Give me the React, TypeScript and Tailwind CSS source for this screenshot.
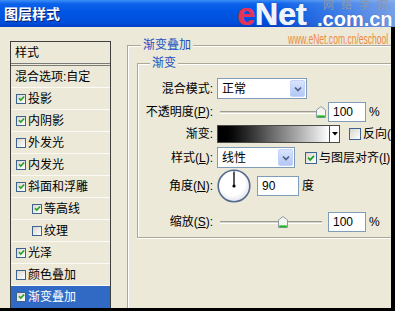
import React from "react";

const F = "font-['Liberation_Sans','Noto_Sans_CJK_SC',sans-serif]";

function Check({ on, big }: { on: boolean; big?: boolean }) {
  return (
    <span
      className={`flex shrink-0 items-center justify-center border border-[#3d6391] bg-gradient-to-br from-[#d8d6cc] to-white ${
        big ? "h-[12px] w-[12px]" : "h-[10px] w-[10px]"
      }`}
    >
      {on && (
        <svg viewBox="0 0 9 9" className={big ? "h-[8px] w-[8px]" : "h-[7px] w-[7px]"}>
          <path d="M1.2 4.2 L3.6 6.6 L7.9 2" stroke="#21a121" strokeWidth="2" fill="none" />
        </svg>
      )}
    </span>
  );
}

function DropBtn() {
  return (
    <span className="flex h-[17px] w-[15px] items-center justify-center rounded-[2px] border border-[#c3d3fd] bg-gradient-to-b from-[#d9e4fc] to-[#b3c7f5]">
      <svg viewBox="0 0 8 6" className="h-[6px] w-[8px]">
        <path d="M1 1.5 L4 4.5 L7 1.5" stroke="#4d6185" strokeWidth="1.7" fill="none" />
      </svg>
    </span>
  );
}

function Select({ text, wide }: { text: string; wide?: boolean }) {
  return (
    <div
      className={`flex h-[21px] items-center justify-between border border-[#7f9db9] bg-white pl-[4px] pr-[1px] ${
        wide ? "w-[90px]" : "w-[78px]"
      }`}
    >
      <span>{text}</span>
      <DropBtn />
    </div>
  );
}

function Thumb({ left }: { left: number }) {
  return (
    <svg width="10" height="12" viewBox="0 0 10 12" className="absolute top-[4px]" style={{ left }}>
      <path d="M0.5 4 L5 0.5 L9.5 4 V11.5 H0.5 Z" fill="#f4f4f0" stroke="#8d9ba8" />
      <path d="M1.2 10.4 H8.8" stroke="#21b421" strokeWidth="2" />
    </svg>
  );
}

function Slider({ pos }: { pos: number }) {
  return (
    <div className="relative h-[20px] w-[108px] shrink-0">
      <div className="absolute left-[3px] right-[3px] top-[9px] h-[3px] border-t border-b border-t-[#9d9d92] border-b-white bg-[#d8d4c6]" />
      <Thumb left={pos} />
    </div>
  );
}

function Input({ v, w }: { v: string; w: string }) {
  return (
    <div className={`flex h-[20px] items-center border border-[#7f9db9] bg-white pl-[4px] ${w}`}>{v}</div>
  );
}

function Row({ label, h, mt, children }: { label: React.ReactNode; h: string; mt: string; children: React.ReactNode }) {
  return (
    <div className={`flex items-center ${h} ${mt}`}>
      <span className="w-[75px] shrink-0 text-right whitespace-nowrap">{label}</span>
      <div className="ml-[4px] flex items-center whitespace-nowrap">{children}</div>
    </div>
  );
}

const items: { t: string; c: boolean; i?: boolean; sel?: boolean }[] = [
  { t: "投影", c: true },
  { t: "内阴影", c: true },
  { t: "外发光", c: false },
  { t: "内发光", c: true },
  { t: "斜面和浮雕", c: true },
  { t: "等高线", c: true, i: true },
  { t: "纹理", c: false, i: true },
  { t: "光泽", c: true },
  { t: "颜色叠加", c: false },
  { t: "渐变叠加", c: true, sel: true },
];

export default function App() {
  return (
    <div className={`relative h-[311px] w-[395px] overflow-hidden bg-black text-[12px] leading-[14px] text-black ${F}`}>
      {/* title bar */}
      <div className="relative flex h-[27px] items-center bg-[linear-gradient(180deg,#3d8ef6_0%,#0c62ea_14%,#0056e4_45%,#004ddb_85%,#0040c4_100%)] pl-[4px]">
        <div className="absolute inset-y-0 right-0 w-[120px] bg-gradient-to-r from-transparent to-[#a9bfe9]/70" />
        <span className="relative text-[14px] font-bold text-white [text-shadow:1px_1px_0_#0a1f70]">图层样式</span>
        <div className="absolute left-[237px] top-[-2px] flex items-baseline text-[32px] font-bold leading-none">
          <span className="text-[#e4335a] [text-shadow:0.5px_0_0_#e4335a]">e</span>
          <span className="text-[#eef3fc] [text-shadow:0.5px_0_0_#eef3fc,0_0_2px_#2a55b0]">Net</span>
        </div>
        <span className="absolute left-[323px] top-[0px] text-[11px] leading-none tracking-[7px] text-[#8b97ab]">网络学院</span>
        <span className="absolute left-[317px] top-[9px] text-[20px] font-bold leading-none text-white [text-shadow:0_0_1px_#3060b8]">
          .com.cn
        </span>
      </div>

      {/* body */}
      <div className="flex h-[281px]">
        <div className="relative flex h-[281px] w-[391px] overflow-hidden bg-[#ece9d8]">
          {/* list */}
          <div className="ml-[10px] mt-[14px] h-[270px] w-[101px] shrink-0 border border-b-0 border-[#3f3f3f] bg-[#ece9d8]">
            <div className="flex h-[21px] items-center pl-[4px]">样式</div>
            <div className="h-[3px] border-b-[3px] border-double border-[#7a7a7a]" />
            <div className="flex h-[22px] items-center border-b border-[#fbfaf4] pl-[4px]">混合选项:自定</div>
            {items.map((it) => (
              <div
                key={it.t}
                className={`flex h-[22px] items-center gap-[2px] border-b ${
                  it.sel ? "border-[#316ac5] bg-[#316ac5] text-white" : "border-[#fbfaf4]"
                } ${it.i ? "pl-[21px]" : "pl-[5px]"}`}
              >
                <Check on={it.c} />
                <span>{it.t}</span>
              </div>
            ))}
          </div>

          {/* right */}
          <div className="relative ml-[16px] mt-[18px] h-[290px] w-[300px] shrink-0 border-l border-t border-[#aca899] shadow-[inset_1px_1px_0_#fff]">
            <span className="absolute left-[13px] top-[-9px] bg-[#ece9d8] px-[2px] leading-[16px] text-[#1a4fc0]">渐变叠加</span>
            <div className="relative ml-[9px] mt-[17px] border-l border-t border-b border-[#aca899] shadow-[inset_1px_1px_0_#fff,0_1px_0_#fff]">
              <span className="absolute left-[12px] top-[-9px] bg-[#ece9d8] px-[2px] leading-[16px] text-[#1a4fc0]">渐变</span>
              <div className="flex flex-col pt-[14px] pb-[5px]">
                <Row label="混合模式:" h="h-[21px]" mt="mt-0">
                  <Select text="正常" wide />
                </Row>
                <Row label={<>不透明度(<u>P</u>):</>} h="h-[20px]" mt="mt-[3px]">
                  <Slider pos={99} />
                  <span className="ml-[3px]"><Input v="100" w="w-[38px]" /></span>
                  <span className="ml-[3px]">%</span>
                </Row>
                <Row label="渐变:" h="h-[18px]" mt="mt-[3px]">
                  <div className="flex h-[18px] w-[123px] border border-[#4a4a4a]">
                    <div className="flex-1 bg-gradient-to-r from-black via-[#6e6e6e] to-white" />
                    <div className="flex w-[10px] items-center justify-center border-l border-[#4a4a4a] bg-white">
                      <svg viewBox="0 0 6 4" className="h-[4px] w-[6px]">
                        <path d="M0 0 H6 L3 3.5 Z" fill="#000" />
                      </svg>
                    </div>
                  </div>
                  <span className="ml-[9px]"><Check on={false} big /></span>
                  <span className="ml-[2px]">反向(<u>R</u>)</span>
                </Row>
                <Row label={<>样式(<u>L</u>):</>} h="h-[21px]" mt="mt-[4px]">
                  <Select text="线性" />
                  <span className="ml-[10px]"><Check on big /></span>
                  <span className="ml-[2px]">与图层对齐(<u>I</u>)</span>
                </Row>
                <Row label={<>角度(<u>N</u>):</>} h="h-[34px]" mt="mt-[1px]">
                  <svg width="34" height="34" viewBox="0 0 34 34">
                    <defs>
                      <radialGradient id="dg" cx="0.45" cy="0.4" r="0.65">
                        <stop offset="0.6" stopColor="#ffffff" />
                        <stop offset="1" stopColor="#d8dce8" />
                      </radialGradient>
                    </defs>
                    <circle cx="17" cy="17" r="15.8" fill="url(#dg)" stroke="#566a90" strokeWidth="1.6" />
                    <line x1="17" y1="17" x2="17" y2="2.5" stroke="#000" strokeWidth="1.3" />
                    <circle cx="17" cy="17" r="1.6" fill="#000" />
                  </svg>
                  <span className="ml-[6px]"><Input v="90" w="w-[42px]" /></span>
                  <span className="ml-[3px]">度</span>
                </Row>
                <Row label={<>缩放(<u>S</u>):</>} h="h-[20px]" mt="mt-[9px]">
                  <Slider pos={61} />
                  <span className="ml-[3px]"><Input v="100" w="w-[38px]" /></span>
                  <span className="ml-[3px]">%</span>
                </Row>
              </div>
            </div>
          </div>

          <span className="absolute left-[288px] top-[4px] origin-left text-[15px] leading-none whitespace-nowrap text-[#ec8a3e] [transform:scaleX(0.57)]">
            www.eNet.com.cn/eschool
          </span>
        </div>
        <div className="w-[4px] bg-black" />
      </div>
      <div className="h-[3px] bg-black" />
    </div>
  );
}
